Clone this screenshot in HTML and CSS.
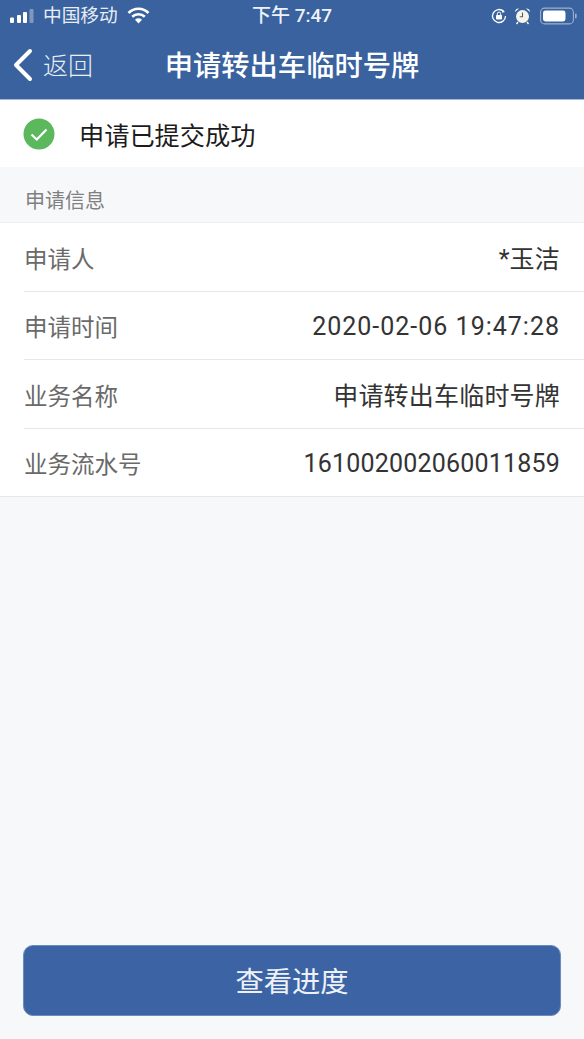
FILE: index.html
```html
<!DOCTYPE html>
<html lang="zh">
<head>
<meta charset="utf-8">
<title>申请转出车临时号牌</title>
<link rel="stylesheet" href="styles.css">
</head>
<body>
<div class="page">
  <header class="header">
    <div class="status">
      <div class="status-left">
        <svg class="signal" width="26" height="16" viewBox="0 0 26 16"><rect x="0" y="9.500" width="4" height="5.500" rx="1" fill="#fff"/><rect x="7" y="7" width="4" height="8" rx="1" fill="#fff"/><rect x="13" y="4" width="4" height="11" rx="1" fill="#fff"/><rect x="19.500" y="1" width="4" height="14" rx="1" fill="#fff" opacity=".35"/></svg>
        <span class="carrier">中国移动</span>
        <svg class="wifi" width="23" height="17" viewBox="0 0 23 17"><path d="M1.500 6 A14 14 0 0 1 21.500 6" fill="none" stroke="#fff" stroke-width="2.600"/><path d="M5.200 9.800 A9 9 0 0 1 17.800 9.800" fill="none" stroke="#fff" stroke-width="2.600"/><path d="M11.500 16.500 L8 12.800 A5 5 0 0 1 15 12.800 Z" fill="#fff"/></svg>
      </div>
      <div class="clock">下午 7:47</div>
      <div class="status-right">
        <svg width="18" height="18" viewBox="0 0 18 18"><path d="M15.500 9 A6.500 6.500 0 1 1 13.500 4.300" fill="none" stroke="#fff" stroke-width="1.300"/><path d="M12.500 2.500 L15 5 L11.800 5.800 Z" fill="#fff"/><rect x="6" y="8" width="6" height="4.600" rx=".8" fill="#fff"/><path d="M7.300 8 V6.800 A1.700 1.700 0 0 1 10.700 6.800 V8" fill="none" stroke="#fff" stroke-width="1"/></svg>
        <svg class="alarm" width="17" height="18" viewBox="0 0 17 18"><circle cx="8.500" cy="9.500" r="6.500" fill="#f7f3e6"/><path d="M8.500 5.500 V9.800 H5.800" fill="none" stroke="#39629f" stroke-width="1.100"/><path d="M1 5 A3.500 3.500 0 0 1 5 1.500 Z M16 5 A3.500 3.500 0 0 0 12 1.500 Z" fill="#fff"/><path d="M4 15 L2.500 17 M13 15 L14.500 17" stroke="#fff" stroke-width="1.300"/></svg>
        <svg class="battery" width="38" height="18" viewBox="0 0 38 18"><rect x=".6" y="1.100" width="32.800" height="15.800" rx="4" fill="none" stroke="#fff" stroke-opacity=".5" stroke-width="1.100"/><rect x="3" y="3.500" width="22.500" height="11" rx="2.400" fill="#fff"/><rect x="35" y="6.500" width="1.600" height="5" rx=".8" fill="#fff" opacity=".5"/></svg>
      </div>
    </div>
    <div class="nav">
      <div class="back">
        <svg width="22" height="34" viewBox="0 0 22 34"><path d="M19 3 L5 17 L19 31" fill="none" stroke="#fff" stroke-width="4" stroke-linecap="round" stroke-linejoin="round"/></svg>
        <span class="back-label">返回</span>
      </div>
      <h1 class="title">申请转出车临时号牌</h1>
    </div>
  </header>

  <section class="result">
    <svg width="32" height="32" viewBox="0 0 32 32"><circle cx="16" cy="16" r="15.500" fill="#5cb85c"/><path d="M8.500 16.500 L13.800 21.500 L23.500 11.500" fill="none" stroke="#fff" stroke-width="2.200"/></svg>
    <span>申请已提交成功</span>
  </section>

  <div class="section-label">申请信息</div>

  <dl class="info">
    <div class="row"><dt>申请人</dt><dd>*玉洁</dd></div>
    <div class="row"><dt>申请时间</dt><dd class="num date">2020-02-06 19:47:28</dd></div>
    <div class="row"><dt>业务名称</dt><dd>申请转出车临时号牌</dd></div>
    <div class="row"><dt>业务流水号</dt><dd class="num">161002002060011859</dd></div>
  </dl>

  <div class="actions">
    <button class="btn" type="button">查看进度</button>
  </div>
</div>
</body>
</html>
```
FILE: styles.css
```css
* { box-sizing: border-box; }
html, body { margin: 0; padding: 0; }
body {
  font-family: Roboto, "Noto Sans CJK SC", sans-serif;
  background: #f7f8fa;
}
.page {
  width: 584px;
  height: 1039px;
  display: flex;
  flex-direction: column;
  overflow: hidden;
}
.header {
  background: #39629f;
  color: #fff;
  height: 100px;
  border-bottom: 1px solid #a9b9d3;
  flex: none;
}
.status {
  height: 31px;
  display: flex;
  align-items: center;
  justify-content: space-between;
  position: relative;
  padding: 0 6px 0 10px;
}
.status-left { display: flex; align-items: center; }
.signal { margin-right: 7px; }
.carrier { font-size: 18.700px; line-height: 20px; color: #e8edf5; }
.wifi { margin-left: 9px; }
.clock {
  position: absolute;
  left: 252px;
  top: 5px;
  font-size: 19px;
  line-height: 22px;
  font-weight: 500;
  color: #eef2f8;
}
.status-right { display: flex; align-items: center; gap: 6px; }
.battery { margin-left: 3px; }
.nav {
  height: 68px;
  position: relative;
  display: flex;
  align-items: center;
  justify-content: center;
}
.back {
  position: absolute;
  left: 11px;
  top: 17px;
  display: flex;
  align-items: flex-start;
  gap: 10px;
  font-size: 25px;
  line-height: 34px;
  color: #eaeff6;
  font-weight: 300;
}
.back-label { padding-top: 2px; }
.title {
  margin: 4px 0 0;
  font-size: 28.300px;
  line-height: 36px;
  font-weight: 500;
  letter-spacing: 0;
}
.result {
  flex: none;
  height: 67px;
  background: #fff;
  display: flex;
  align-items: center;
  padding: 0 0 0 23px;
  gap: 24px;
  font-size: 25.200px;
  color: #1c1c1e;
}
.section-label {
  flex: none;
  height: 56px;
  padding: 9px 25px 0;
  display: flex;
  align-items: center;
  font-size: 20px;
  color: #808080;
  border-bottom: 1px solid #eceef0;
}
.info { margin: 0; background: #fff; flex: none; }
.row {
  height: 68.500px;
  margin-left: 24px;
  padding-right: 24px;
  display: flex;
  align-items: center;
  justify-content: space-between;
  border-bottom: 1px solid #e6e7e9;
}
.row:last-child { margin-left: 0; padding-left: 24px; }
.row dt { padding-top: 2px; font-size: 23.500px; color: #6a6a6a; }
.row dd { margin: 0; font-size: 25px; letter-spacing: .2px; color: #333; }
.row .num { padding-top: 3px; }
.row .date { letter-spacing: 1px; }
.actions { margin-top: auto; padding: 0 23px 23px 23px; }
.btn {
  display: block;
  width: 100%;
  height: 71px;
  padding: 0 0 2px;
  background: #3c64a4;
  border: 1px solid #6b8cbc;
  border-radius: 10px;
  color: #eef2f8;
  font: inherit;
  font-size: 28.300px;
}
```
